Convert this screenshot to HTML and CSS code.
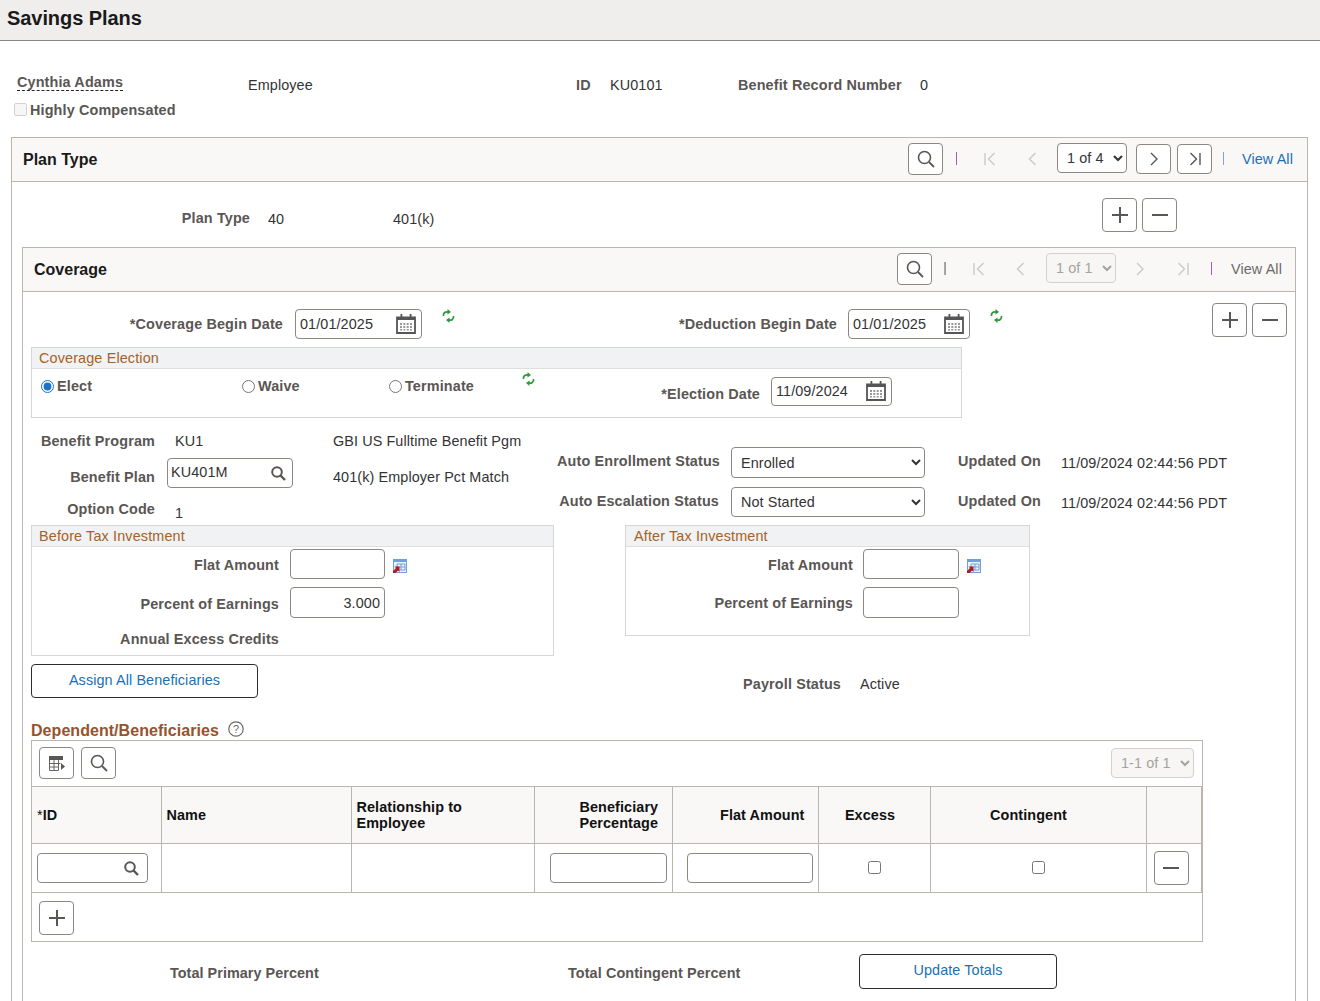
FILE: index.html
```html
<!DOCTYPE html>
<html lang="en">
<head>
<meta charset="utf-8">
<title>Savings Plans</title>
<link rel="stylesheet" href="styles.css">
</head>
<body>
<svg class="defs" aria-hidden="true">
  <symbol id="i-search" viewBox="0 0 18 18"><circle cx="7.5" cy="7.5" r="6" fill="none" stroke="currentColor" stroke-width="1.6"/><path d="M12 12l5 5" stroke="currentColor" stroke-width="1.8" fill="none"/></symbol>
  <symbol id="i-search-b" viewBox="0 0 15 15"><circle cx="6" cy="6" r="4.800" fill="none" stroke="currentColor" stroke-width="2"/><path d="M9.500 9.500l4.500 4.500" stroke="currentColor" stroke-width="2.400" fill="none"/></symbol>
  <symbol id="i-first" viewBox="0 0 12 14"><path d="M1 1v12" stroke="currentColor" stroke-width="1.4"/><path d="M10.500 1L4.500 7l6 6" fill="none" stroke="currentColor" stroke-width="1.4"/></symbol>
  <symbol id="i-prev" viewBox="0 0 12 14"><path d="M7.500 1L1.500 7l6 6" fill="none" stroke="currentColor" stroke-width="1.4"/></symbol>
  <symbol id="i-next" viewBox="0 0 12 14"><path d="M3 1l6 6-6 6" fill="none" stroke="currentColor" stroke-width="1.4"/></symbol>
  <symbol id="i-last" viewBox="0 0 12 14"><path d="M11 1v12" stroke="currentColor" stroke-width="1.4"/><path d="M1.500 1l6 6-6 6" fill="none" stroke="currentColor" stroke-width="1.4"/></symbol>
  <symbol id="i-plus" viewBox="0 0 18 18"><path d="M9 1v16M1 9h16" stroke="currentColor" stroke-width="2"/></symbol>
  <symbol id="i-minus" viewBox="0 0 18 18"><path d="M1 9h16" stroke="currentColor" stroke-width="2"/></symbol>
  <symbol id="i-cal" viewBox="0 0 20 20"><path d="M1 3.500h18v15.500H1z" fill="none" stroke="currentColor" stroke-width="1.800"/><path d="M1 3h18v3H1zM4.500 0h1.800v4H4.500zM13.700 0h1.800v4h-1.800z" fill="currentColor"/><path d="M4 9h2v2H4zM7.300 9h2v2h-2zM10.700 9h2v2h-2zM14 9h2v2h-2zM4 12h2v2H4zM7.300 12h2v2h-2zM10.700 12h2v2h-2zM14 12h2v2h-2zM4 15h2v1.500H4zM7.300 15h2v1.500h-2zM10.700 15h2v1.500h-2zM14 15h2v1.500h-2z" fill="currentColor" opacity=".6"/></symbol>
  <symbol id="i-refresh" viewBox="0 0 13 14"><path d="M1.500 7C1 3.800 3.500 2.400 6.500 3" fill="none" stroke="#2e9a3a" stroke-width="1.800"/><path d="M5.500 0l3.500 3-3.500 2.600z" fill="#2e9a3a"/><path d="M11.500 7c.5 3.200-2 4.600-5 4" fill="none" stroke="#2e9a3a" stroke-width="1.800"/><path d="M7.500 14L4 11l3.500-2.600z" fill="#2e9a3a"/></symbol>
  <symbol id="i-prompt" viewBox="0 0 14 14"><path d="M0 0h14v14H0z" fill="#6f9fdc"/><path d="M1 3h12v10H1z" fill="#eef3fb"/><path d="M4 5h8v6H4z" fill="none" stroke="#6f9fdc"/><path d="M8 5v6M4 8h8" stroke="#6f9fdc"/><path d="M0 14v-2l3-3-1.500-1.500H6.500V13L5 11.500 2.500 14z" fill="#b01a22"/></symbol>
  <symbol id="i-grid" viewBox="0 0 16 15"><path d="M0 0h14v4H0z" fill="currentColor"/><path d="M.5 4v10.500h9M.5 7.500h11M.5 11h9M5 4v10.500M9.500 4v10.500" fill="none" stroke="currentColor" stroke-width=".9"/><path d="M12 7l4 3.500L12 14z" fill="currentColor"/></symbol>
</svg>

<div class="page">
  <header class="page-head"><h1>Savings Plans</h1></header>

  <section class="person">
    <span class="person-name">Cynthia Adams</span>
    <span class="val">Employee</span>
    <span class="lbl">ID</span>
    <span class="val">KU0101</span>
    <span class="lbl">Benefit Record Number</span>
    <span class="val">0</span>
  </section>
  <div class="person-flag"><span class="fake-check"></span><span class="lbl">Highly Compensated</span></div>

  <section class="box plan-box">
    <div class="box-head">
      <h2>Plan Type</h2>
      <nav class="pager plan-pager">
        <button class="ibtn ibtn-tall"><svg class="ico18"><use href="#i-search"/></svg></button>
        <span class="sep sep-purple"></span>
        <svg class="pg-ico off"><use href="#i-first"/></svg>
        <svg class="pg-ico off"><use href="#i-prev"/></svg>
        <select class="pg-select"><option>1 of 4</option></select>
        <button class="ibtn ibtn-pg"><svg class="pg-ico"><use href="#i-next"/></svg></button>
        <button class="ibtn ibtn-pg"><svg class="pg-ico"><use href="#i-last"/></svg></button>
        <span class="sep sep-blue"></span>
        <a class="link">View All</a>
      </nav>
    </div>

    <div class="plan-row">
      <span class="lbl ta-r">Plan Type</span>
      <span class="val plan-code">40</span>
      <span class="val">401(k)</span>
      <button class="ibtn ibtn-add"><svg class="ico18"><use href="#i-plus"/></svg></button>
      <button class="ibtn ibtn-add"><svg class="ico18"><use href="#i-minus"/></svg></button>
    </div>

    <section class="box cov-box">
      <div class="box-head">
        <h2>Coverage</h2>
        <nav class="pager cov-pager">
          <button class="ibtn ibtn-tall"><svg class="ico18"><use href="#i-search"/></svg></button>
          <span class="sep sep-blue2"></span>
          <svg class="pg-ico off"><use href="#i-first"/></svg>
          <svg class="pg-ico off"><use href="#i-prev"/></svg>
          <select class="pg-select" disabled><option>1 of 1</option></select>
          <span class="pg-plain"><svg class="pg-ico off"><use href="#i-next"/></svg></span>
          <span class="pg-plain"><svg class="pg-ico off"><use href="#i-last"/></svg></span>
          <span class="sep sep-purple"></span>
          <a class="link link-off">View All</a>
        </nav>
      </div>

      <div class="date-row">
        <span class="lbl ta-r date-lbl">*Coverage Begin Date</span>
        <span class="field date-a"><span>01/01/2025</span><svg class="ico-cal"><use href="#i-cal"/></svg></span>
        <svg class="ico-refresh date-ref"><use href="#i-refresh"/></svg>
        <span class="lbl ta-r date-lbl date-lbl-b">*Deduction Begin Date</span>
        <span class="field date-b"><span>01/01/2025</span><svg class="ico-cal"><use href="#i-cal"/></svg></span>
        <svg class="ico-refresh date-ref"><use href="#i-refresh"/></svg>
        <button class="ibtn ibtn-add"><svg class="ico18"><use href="#i-plus"/></svg></button>
        <button class="ibtn ibtn-add"><svg class="ico18"><use href="#i-minus"/></svg></button>
      </div>

      <section class="group election">
        <h3>Coverage Election</h3>
        <div class="election-row">
          <label class="radio"><input type="radio" name="e" checked><span class="lbl">Elect</span></label>
          <label class="radio"><input type="radio" name="e"><span class="lbl">Waive</span></label>
          <label class="radio"><input type="radio" name="e"><span class="lbl">Terminate</span></label>
          <svg class="ico-refresh elect-ref"><use href="#i-refresh"/></svg>
          <span class="lbl ta-r elect-lbl">*Election Date</span>
          <span class="field date-c"><span>11/09/2024</span><svg class="ico-cal"><use href="#i-cal"/></svg></span>
        </div>
      </section>

      <div class="benefit">
        <div class="benefit-left">
          <div class="bl-row bl-1"><span class="lbl ta-r">Benefit Program</span><span class="val bl-val">KU1</span><span class="val">GBI US Fulltime Benefit Pgm</span></div>
          <div class="bl-row bl-2"><span class="lbl ta-r">Benefit Plan</span><span class="field plan-field"><span>KU401M</span><svg class="ico-s"><use href="#i-search-b"/></svg></span><span class="val">401(k) Employer Pct Match</span></div>
          <div class="bl-row bl-3"><span class="lbl ta-r">Option Code</span><span class="val bl-val opt-val">1</span></div>
        </div>
        <div class="benefit-right">
          <div class="br-row"><span class="lbl ta-r br-lbl">Auto Enrollment Status</span><select class="sel"><option>Enrolled</option></select><span class="lbl br-lbl">Updated On</span><span class="val">11/09/2024 02:44:56 PDT</span></div>
          <div class="br-row"><span class="lbl ta-r br-lbl">Auto Escalation Status</span><select class="sel"><option>Not Started</option></select><span class="lbl br-lbl">Updated On</span><span class="val">11/09/2024 02:44:56 PDT</span></div>
        </div>
      </div>

      <div class="invest">
        <section class="group inv-before">
          <h3>Before Tax Investment</h3>
          <div class="inv-row"><span class="lbl ta-r">Flat Amount</span><span class="field num"></span><svg class="ico-prompt"><use href="#i-prompt"/></svg></div>
          <div class="inv-row"><span class="lbl ta-r">Percent of Earnings</span><span class="field num">3.000</span></div>
          <div class="inv-row inv-text"><span class="lbl ta-r">Annual Excess Credits</span></div>
        </section>
        <section class="group inv-after">
          <h3>After Tax Investment</h3>
          <div class="inv-row"><span class="lbl ta-r">Flat Amount</span><span class="field num"></span><svg class="ico-prompt"><use href="#i-prompt"/></svg></div>
          <div class="inv-row"><span class="lbl ta-r">Percent of Earnings</span><span class="field num"></span></div>
        </section>
      </div>

      <div class="actions">
        <button class="tbtn tbtn-assign">Assign All Beneficiaries</button>
        <span class="lbl ta-r pay-lbl">Payroll Status</span>
        <span class="val pay-val">Active</span>
      </div>

      <div class="dep-title"><h4>Dependent/Beneficiaries</h4>
        <svg class="ico-help" viewBox="0 0 16 16"><circle cx="8" cy="8" r="7.200" fill="none" stroke="currentColor" stroke-width="1.200"/><text x="8" y="11.500" text-anchor="middle" class="help-q">?</text></svg>
      </div>

      <section class="dep-grid">
        <div class="dep-tools">
          <button class="ibtn ibtn-tool"><svg class="ico-grid"><use href="#i-grid"/></svg></button>
          <button class="ibtn ibtn-tool"><svg class="ico18"><use href="#i-search"/></svg></button>
          <select class="pg-select dep-select" disabled><option>1-1 of 1</option></select>
        </div>
        <table class="dep-table">
          <colgroup>
            <col class="c1"><col class="c2"><col class="c3"><col class="c4"><col class="c5"><col class="c6"><col class="c7"><col class="c8">
          </colgroup>
          <thead>
            <tr>
              <th class="th-id"><span class="star">*</span>ID</th>
              <th>Name</th>
              <th>Relationship to<br>Employee</th>
              <th class="th-ben">Beneficiary<br>Percentage</th>
              <th class="th-flat">Flat Amount</th>
              <th class="th-exc">Excess</th>
              <th class="th-con">Contingent</th>
              <th></th>
            </tr>
          </thead>
          <tbody>
            <tr>
              <td class="td-id"><span class="field id-field"><svg class="ico-s"><use href="#i-search-b"/></svg></span></td>
              <td></td>
              <td></td>
              <td class="td-ben"><span class="field ben-field"></span></td>
              <td class="td-flat"><span class="field flat-field"></span></td>
              <td class="td-exc"><input type="checkbox" class="chk"></td>
              <td class="td-con"><input type="checkbox" class="chk"></td>
              <td class="td-del"><button class="ibtn ibtn-tool"><svg class="ico18"><use href="#i-minus"/></svg></button></td>
            </tr>
          </tbody>
        </table>
        <div class="dep-foot"><button class="ibtn ibtn-tool ibtn-foot"><svg class="ico18"><use href="#i-plus"/></svg></button></div>
      </section>

      <div class="totals">
        <span class="lbl tot-a">Total Primary Percent</span>
        <span class="lbl tot-b">Total Contingent Percent</span>
        <button class="tbtn tbtn-update">Update Totals</button>
      </div>
    </section>
  </section>
</div>
</body>
</html>
```

FILE: styles.css
```css
* { box-sizing: border-box; }
html, body { margin: 0; padding: 0; background: #fff; }
body { font-family: "Liberation Sans", Arial, sans-serif; font-size: 14.4px; color: #333; line-height: 20px; letter-spacing: .1px; }
.defs { position: absolute; width: 0; height: 0; }
.page { height: 1001px; overflow: hidden; }
h1, h2, h3, h4 { margin: 0; }

.lbl { font-weight: 700; color: #5a5654; display: block; letter-spacing: .14px; white-space: nowrap; }
.val { color: #333; display: block; white-space: nowrap; }
.ta-r { text-align: right; }
button, select { font-family: inherit; letter-spacing: inherit; }

.page-head { height: 41px; background: #efeeed; border-bottom: 1px solid #8a8580; padding: 8px 0 0 7px; }
.page-head h1 { font-size: 20px; line-height: 20px; color: #1a1a1a; letter-spacing: -.07px; }

.person { display: grid; grid-template-columns: 231px 328px 34px 128px 182px auto; margin: 34px 0 0 17px; height: 20px; align-items: center; }
.person-name { font-weight: 700; color: #5a5654; border-bottom: 1px dashed #222; justify-self: start; line-height: 16px; margin-top: -5px; letter-spacing: .14px; }
.person-flag { display: flex; align-items: center; gap: 3px; margin: 5px 0 0 14px; height: 20px; }
.fake-check { width: 13px; height: 13px; border: 1px solid #d3d2d0; border-radius: 2px; background: #f6f6f5; margin-top: -2px; }

.box { border: 1px solid #bab5ae; }
.box-head { display: flex; justify-content: space-between; align-items: center; background: #f9f8f7; border-bottom: 1px solid #bab5ae; height: 44px; padding-left: 11px; }
.box-head h2 { font-size: 16px; color: #1a1a1a; letter-spacing: 0; }
.plan-box { margin: 17px 0 0 11px; width: 1297px; height: 1000px; }

.pager { display: grid; align-items: center; justify-items: start; height: 100%; padding-bottom: 2px; }
.plan-pager { grid-template-columns: 48px 28px 44px 29px 79px 41px 46px 19px 65px; }
.cov-pager { grid-template-columns: 47px 29px 43px 30px 76px 43px 46px 20px 64px; }
.sep { width: 1px; height: 13px; display: block; }
.sep-purple { background: #a05fa8; }
.sep-blue { background: #8ea4b4; }
.sep-blue2 { background: #c9a27a; box-shadow: 1px 0 0 #7fa3c4; }
.pg-ico { width: 12px; height: 14px; display: block; color: #555; }
.pg-ico.off { color: #cbc9c6; }
.pg-plain { width: 35px; display: flex; justify-content: center; }
.pg-select { width: 70px; height: 30px; border: 1px solid #8c8781; border-radius: 4px; background: #fff; font-size: 14.4px; color: #333; padding-left: 5px; margin-top: -1px; }
.pg-select:disabled { border-color: #d3d1ce; background: #f7f6f4; color: #a5a3a0; opacity: 1; }
.link { color: #1a6fb5; }
.link-off { color: #6c6a68; }

.ibtn { display: flex; align-items: center; justify-content: center; padding: 0; background: #fff; border: 1px solid #8c8781; border-radius: 4px; color: #5a5654; width: 35px; }
.ibtn-tall { height: 32px; }
.ibtn-pg { height: 30px; }
.ibtn-add { height: 34px; }
.ibtn-tool { height: 32px; }
.ico18 { width: 18px; height: 18px; display: block; }

.plan-row { display: grid; grid-template-columns: 238px 143px 709px 40px 35px; height: 65px; align-items: start; padding-top: 16px; }
.plan-row .lbl { margin-top: 10px; }
.plan-row .val { margin-top: 11px; }
.plan-code { padding-left: 18px; }

.cov-box { margin-left: 10px; width: 1274px; height: 1000px; border-bottom: 0; }

.date-row { display: grid; grid-template-columns: 272px 147px 60px 346px 142px 222px 40px 35px; height: 55px; padding-top: 11px; align-items: start; }
.date-lbl { line-height: 30px; margin-top: 6px; padding-right: 12px; }
.date-lbl-b { padding-right: 11px; }
.field { display: flex; align-items: center; justify-content: space-between; border: 1px solid #8c8781; border-radius: 4px; background: #fff; height: 30px; padding: 0 4px; color: #333; }
.date-a { width: 127px; margin-top: 6px; }
.date-b { width: 122px; margin-top: 6px; }
.date-c { width: 121px; height: 29px; margin-top: 8px; padding-bottom: 1px; }
.ico-cal { width: 20px; height: 20px; color: #555; margin-right: 1px; flex: none; }
.ico-refresh { width: 13px; height: 14px; display: block; }
.date-ref { margin-top: 6px; }

.group { border: 1px solid #d6d6d4; }
.group h3 { font-size: 14.4px; font-weight: 400; color: #a5622a; background: #f0f2f3; border-bottom: 1px solid #dfdfdd; height: 21px; line-height: 20px; padding-left: 7px; letter-spacing: .14px; }
.inv-after h3 { padding-left: 8px; }
.election { margin-left: 8px; width: 931px; height: 71px; }
.election-row { display: grid; grid-template-columns: 210px 147px 133px 40px 209px 121px; height: 48px; align-items: start; }
.radio { display: flex; align-items: center; gap: 3px; margin-top: 7px; padding-left: 9px; }
.radio + .radio { padding-left: 0; }
.radio input { margin: 0; width: 13px; height: 13px; accent-color: #1a73c8; }
.elect-ref { margin-top: 3px; }
.elect-lbl { margin-top: 15px; padding-right: 11px; }

.benefit { display: flex; height: 107px; }
.benefit-left { width: 534px; }
.bl-row { display: grid; grid-template-columns: 132px 178px auto; }
.bl-1 { height: 40px; padding-top: 13px; }
.bl-val { padding-left: 20px; }
.bl-2 { height: 33px; line-height: 38px; }
.bl-2 .lbl { line-height: 38px; }
.bl-2 .val { line-height: 38px; }
.plan-field { width: 126px; margin-left: 12px; height: 30px; line-height: 20px; padding: 0 6px 0 3px; }
.plan-field span { margin-top: -3px; }
.ico-s { width: 15px; height: 15px; color: #5a5654; display: block; }
.bl-3 { height: 34px; line-height: 36px; }
.bl-3 .lbl { line-height: 36px; }
.opt-val { line-height: 44px; padding-left: 20px; }
.benefit-right { padding-top: 29px; }
.br-row { display: grid; grid-template-columns: 162px 12px 194px 33px 103px auto; height: 40px; align-items: start; }
.br-row .br-lbl { line-height: 28px; }
.br-row .br-lbl:first-child { grid-column: 1; }
.br-row .sel { grid-column: 3; }
.br-row .br-lbl + .sel + .br-lbl { grid-column: 5; }
.br-row .val { grid-column: 6; line-height: 32px; }
.sel { width: 194px; height: 31px; border: 1px solid #8c8781; border-radius: 4px; background: #fff; font-size: 14.4px; color: #333; padding-left: 5px; }
.br-row + .br-row .sel { height: 30px; }

.invest { display: flex; gap: 71px; margin-left: 8px; align-items: flex-start; height: 131px; }
.inv-before { width: 523px; height: 131px; }
.inv-after { width: 405px; height: 111px; }
.inv-row { display: grid; align-items: center; height: 31px; margin-top: 8px; }
.group h3 + .inv-row { margin-top: 2px; height: 30px; }
.group h3 + .inv-row .lbl { margin-top: 2px; }
.inv-before .inv-row { grid-template-columns: 247px 11px 95px 8px 14px; }
.inv-after .inv-row { grid-template-columns: 227px 10px 96px 8px 14px; }
.inv-row .lbl { grid-column: 1; }
.inv-before .inv-row:nth-child(3) .lbl { margin-top: 2px; }
.inv-row .field { grid-column: 3; justify-content: flex-end; padding-right: 4px; height: 100%; }
.inv-row .ico-prompt { grid-column: 5; width: 14px; height: 14px; margin-top: 3px; }
.inv-before .inv-text { height: 20px; margin-top: 11px; }

.actions { display: flex; align-items: center; margin: 8px 0 0 8px; height: 34px; }
.tbtn { background: #fff; border: 1px solid #2c2c2c; border-radius: 4px; color: #1a6fb5; font-size: 14.4px; padding: 0 0 3px; }
.tbtn-assign { width: 227px; height: 34px; }
.pay-lbl { width: 583px; margin-top: 6px; }
.pay-val { margin: 6px 0 0 19px; }

.dep-title { display: flex; align-items: flex-end; gap: 9px; margin-left: 8px; height: 42px; }
.dep-title h4 { font-size: 16px; line-height: 22px; color: #96532d; letter-spacing: .05px; margin-bottom: -2px; }
.ico-help { width: 16px; height: 16px; color: #6a6662; margin-bottom: 3px; }
.help-q { font-size: 11px; fill: #6a6662; font-family: "Liberation Sans", sans-serif; }

.dep-grid { margin-left: 8px; width: 1172px; height: 202px; border: 1px solid #bab5ae; }
.dep-tools { display: flex; gap: 7px; height: 45px; padding: 6px 0 0 7px; align-items: flex-start; }
.dep-select { width: 83px; margin: 1px 0 0 988px; }
.ico-grid { width: 16px; height: 15px; display: block; color: #5a5654; }

.dep-table { border-collapse: collapse; table-layout: fixed; width: 1170px; }
.c1 { width: 129px; } .c2 { width: 190px; } .c3 { width: 183px; } .c4 { width: 138px; }
.c5 { width: 146px; } .c6 { width: 112px; } .c7 { width: 216px; } .c8 { width: 56px; }
.dep-table th, .dep-table td { border: 1px solid #bab5ae; padding: 0; }
.dep-table tr > :first-child { border-left: 0; }
.dep-table tr > :last-child { border-right: 2px solid #bab5ae; }
.dep-table th { background: #f9f8f7; color: #111; font-size: 14.4px; line-height: 16px; height: 57px; text-align: left; padding-left: 5px; }
.star { font-weight: 400; }
.dep-table td { height: 49px; }
.dep-table .th-ben { padding-left: 45px; }
.dep-table .th-flat { text-align: right; padding-right: 13px; }
.dep-table .th-exc { text-align: center; padding-left: 0; padding-right: 8px; }
.dep-table .th-con { text-align: center; padding-left: 0; padding-right: 19px; }
.id-field { width: 111px; height: 30px; margin-left: 5px; justify-content: flex-end; padding-right: 8px; }
.ben-field { width: 117px; margin-left: 15px; }
.flat-field { width: 126px; margin-left: 14px; }
.td-exc, .td-con { text-align: center; }
.chk { width: 13px; height: 13px; margin: -4px 0 0; vertical-align: middle; }
.td-del .ibtn { margin-left: 7px; height: 34px; }
.dep-foot { padding: 8px 0 0 7px; }
.ibtn-foot { height: 34px; }

.totals { display: flex; align-items: flex-start; margin-left: 147px; padding-top: 12px; }
.tot-a { width: 398px; line-height: 38px; letter-spacing: .05px; }
.tot-b { width: 291px; line-height: 38px; letter-spacing: .1px; }
.tbtn-update { width: 198px; height: 35px; }
```
